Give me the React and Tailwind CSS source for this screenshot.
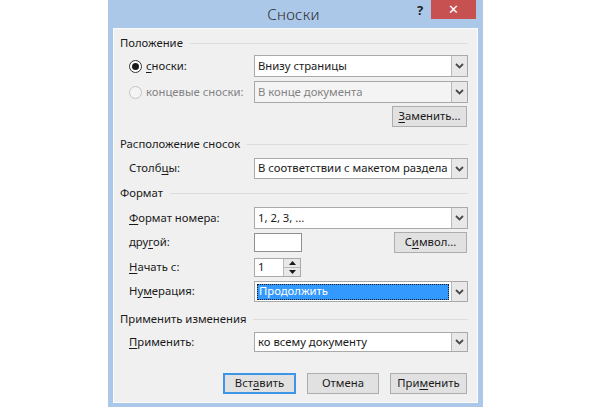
import React from 'react';

const font = { fontFamily: '"Noto Sans", "Open Sans", sans-serif' };

const Chevron = () => (
  <svg width="9" height="6" viewBox="0 0 9 6">
    <path d="M1 1 L4.5 4.5 L8 1" fill="none" stroke="#4a4a4a" strokeWidth="1.8" />
  </svg>
);

const Combo = ({ value, disabled, selected, h = 'h-[22px]' }) => (
  <div
    className={`flex ${h} w-[214px] border border-[#a9a9a9] ${
      disabled ? 'bg-[#f4f4f4] text-[#838383]' : 'bg-white text-[#1a1a1a]'
    }`}
  >
    <div className="flex flex-1 items-center overflow-hidden whitespace-nowrap px-[2px]">
      {selected ? (
        <div className="flex h-[16px] w-full items-center border border-dotted border-[#1b1b1b] bg-[#3399ff] px-[1px] text-white">
          {value}
        </div>
      ) : (
        <span className="pl-[1px]">{value}</span>
      )}
    </div>
    <div className="flex w-[16px] items-center justify-center border-l border-[#b9b9b9] bg-[#e8e8e8]">
      <Chevron />
    </div>
  </div>
);

const Btn = ({ children, w = 'w-[75px]', primary }) => (
  <div
    className={`flex h-[21px] ${w} items-center justify-center border ${
      primary ? 'border-[#3c95e6] shadow-[inset_0_0_0_1px_#3c95e6]' : 'border-[#adadad]'
    } bg-[#e1e1e1] text-[#1a1a1a]`}
  >
    {children}
  </div>
);

const U = ({ children }) => <span className="underline underline-offset-2 decoration-1">{children}</span>;

const Header = ({ children, mt }) => (
  <div className={`flex h-[16px] items-center ${mt}`}>
    <span className="whitespace-nowrap text-[#1a1a1a]">{children}</span>
    <div className="ml-[7px] h-px flex-1 bg-[#dcdcdc]" />
  </div>
);

const Row = ({ label, mt, h = 'h-[22px]', children }) => (
  <div className={`flex ${h} items-center ${mt} pl-[9px]`}>
    <div className="w-[125px] shrink-0 whitespace-nowrap text-[#1a1a1a]">{label}</div>
    {children}
  </div>
);

const Radio = ({ checked, disabled }) => (
  <div
    className={`mr-[4px] flex h-[13px] w-[13px] items-center justify-center rounded-full border ${
      disabled ? 'border-[#c4c4c4] bg-[#f4f4f4]' : 'border-[#333] bg-white'
    }`}
  >
    {checked && <div className="h-[7px] w-[7px] rounded-full bg-[#1a1a1a]" />}
  </div>
);

export default function App() {
  return (
    <div className="h-[407px] w-[591px] overflow-hidden bg-white text-[11.3px]" style={font}>
      <div className="ml-[108px] flex h-[407px] w-[375px] flex-col bg-[#abc8e9] px-[5px] pb-[5px]">
        <div className="relative flex h-[28px] shrink-0 items-center justify-center pr-[4px]">
          <span className="text-[15px] font-light tracking-[0.3px] text-[#2b2b2b]">Сноски</span>
          <span className="absolute left-[304px] top-[1px] text-[13px] font-bold text-[#222]">?</span>
          <div className="absolute left-[318px] top-0 flex h-[19px] w-[45px] items-center justify-center bg-[#c75050] text-[13px] text-white">
            ✕
          </div>
        </div>
        <div className="flex flex-1 flex-col border border-[#fbfbfb] bg-[#f0f0f0] pl-[6px] pr-[9px] pb-[8px]">
          <Header mt="mt-[6px]">Положение</Header>
          <Row
            mt="mt-[4px]"
            label={
              <span className="flex items-center">
                <Radio checked />
                <U>с</U>носки:
              </span>
            }
          >
            <Combo value="Внизу страницы" />
          </Row>
          <Row
            mt="mt-[4px]"
            label={
              <span className="flex items-center text-[#838383]">
                <Radio disabled />
                концевые сноски:
              </span>
            }
          >
            <Combo value="В конце документа" disabled />
          </Row>
          <div className="mt-[3px] flex justify-end pr-[1px]">
            <Btn>
              <span>
                <U>З</U>аменить...
              </span>
            </Btn>
          </div>
          <Header mt="mt-[9px]">Расположение сносок</Header>
          <Row
            mt="mt-[6px]"
            h="h-[21px]"
            label={
              <span>
                Столб<U>ц</U>ы:
              </span>
            }
          >
            <Combo value="В соответствии с макетом раздела" h="h-[21px]" />
          </Row>
          <Header mt="mt-[6px]">Формат</Header>
          <Row
            mt="mt-[6px]"
            label={
              <span>
                <U>Ф</U>ормат номера:
              </span>
            }
          >
            <Combo value="1, 2, 3, ..." />
          </Row>
          <Row
            mt="mt-[3px]"
            h="h-[21px]"
            label={
              <span>
                дру<U>г</U>ой:
              </span>
            }
          >
            <div className="h-[19px] w-[48px] border border-[#8f8f8f] bg-white" />
            <div className="ml-auto pr-[1px]">
              <Btn w="w-[73px]">
                <span>
                  С<U>и</U>мвол...
                </span>
              </Btn>
            </div>
          </Row>
          <Row
            mt="mt-[5px]"
            h="h-[19px]"
            label={
              <span>
                <U>Н</U>ачать с:
              </span>
            }
          >
            <div className="flex h-[19px] w-[47px] border border-[#a9a9a9] bg-white">
              <div className="flex flex-1 items-center pl-[3px] text-[#1a1a1a]">1</div>
              <div className="flex w-[17px] flex-col border-l border-[#b9b9b9]">
                <div className="flex flex-1 items-center justify-center border-b border-[#b9b9b9] bg-[#e8e8e8]">
                  <svg width="7" height="4" viewBox="0 0 7 4">
                    <path d="M0 4 L3.5 0 L7 4 Z" fill="#1a1a1a" />
                  </svg>
                </div>
                <div className="flex flex-1 items-center justify-center bg-[#e8e8e8]">
                  <svg width="7" height="4" viewBox="0 0 7 4">
                    <path d="M0 0 L3.5 4 L7 0 Z" fill="#1a1a1a" />
                  </svg>
                </div>
              </div>
            </div>
          </Row>
          <Row
            mt="mt-[4px]"
            h="h-[21px]"
            label={
              <span>
                Ну<U>м</U>ерация:
              </span>
            }
          >
            <Combo value="Продолжить" selected h="h-[21px]" />
          </Row>
          <Header mt="mt-[9px]">Применить изменения</Header>
          <Row
            mt="mt-[5px]"
            h="h-[20px]"
            label={
              <span>
                <U>П</U>рименить:
              </span>
            }
          >
            <Combo value="ко всему документу" h="h-[20px]" />
          </Row>
          <div className="mt-[21px] flex justify-end gap-[11px] pr-[1px]">
            <Btn w="w-[73px]" primary>
              <span>
                Вст<U>а</U>вить
              </span>
            </Btn>
            <Btn w="w-[72px]">Отмена</Btn>
            <Btn w="w-[77px]">
              <span>
                При<U>м</U>енить
              </span>
            </Btn>
          </div>
        </div>
      </div>
    </div>
  );
}
